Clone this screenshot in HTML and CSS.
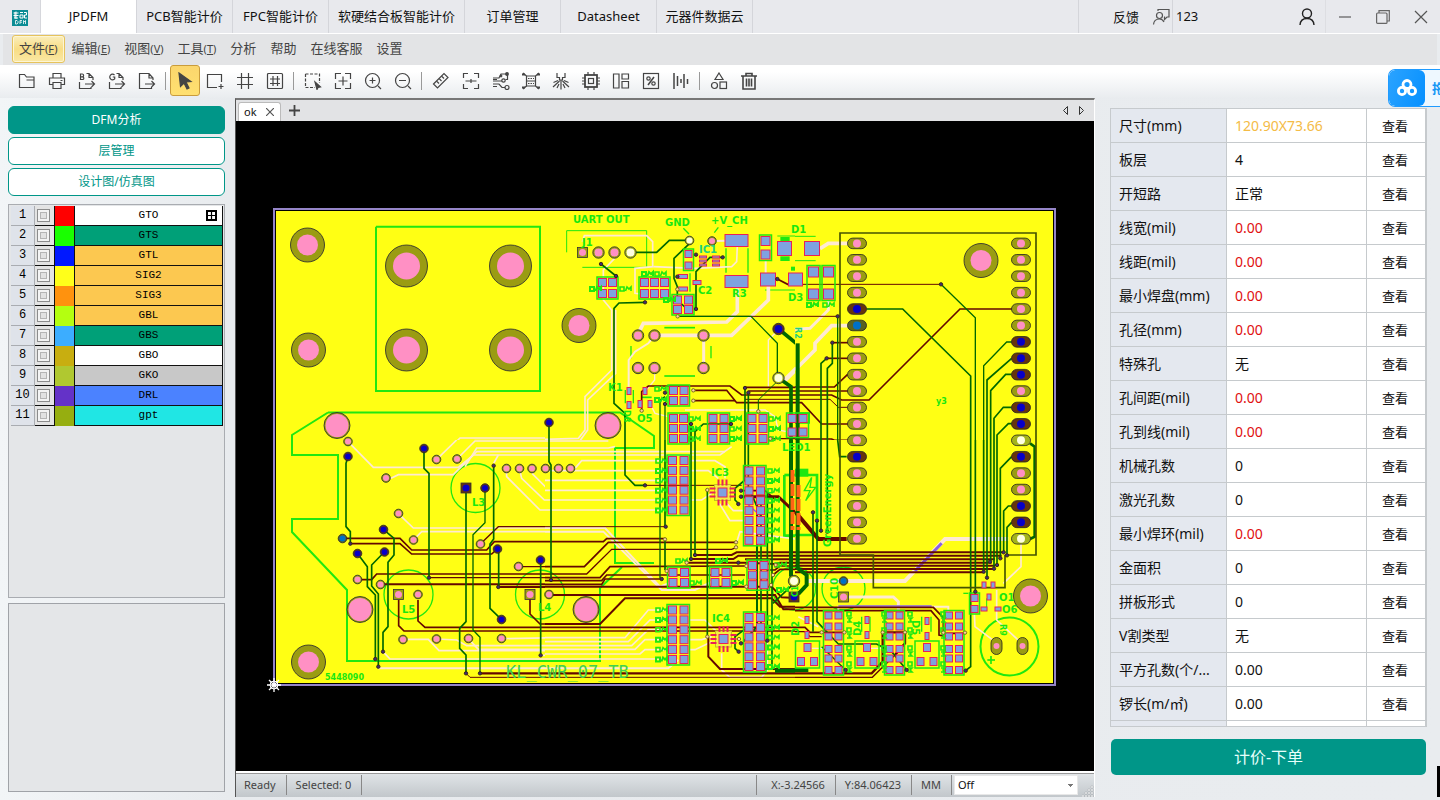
FILE: index.html
```html
<!DOCTYPE html>
<html lang="zh-CN">
<head>
<meta charset="utf-8">
<title>JPDFM</title>
<link rel="stylesheet" href="styles.css">
</head>
<body>
<header class="titlebar">
  <div class="logo"><svg width="16" height="16" viewBox="0 0 16 16"><rect width="16" height="16" fill="#0b8c94"/><path d="M1.500 3h5M4 1.500V9M1.500 5.500h5M2 8h4M3 2v6M8 2.500h3M8 5h3v3H8zM12 2.500h2.500V5H12.500v3h2.500" stroke="#fff" fill="none"/><path d="M3.500 10.500V14h1.500l1-1v-1.500l-1-1zM10 10.500H8V14M8 12.200h2M11.500 14v-3.500l1 1.500 1-1.500V14" stroke="#fff" fill="none" stroke-width=".8"/></svg></div>
  <nav class="tabs">
    <button class="tab tab-on">JPDFM</button>
    <button class="tab">PCB智能计价</button>
    <button class="tab">FPC智能计价</button>
    <button class="tab tab-wide">软硬结合板智能计价</button>
    <button class="tab">订单管理</button>
    <button class="tab">Datasheet</button>
    <button class="tab">元器件数据云</button>
  </nav>
  <div class="account">
    <button class="feedback">反馈<svg width="18" height="18" viewBox="0 0 18 18" fill="none" stroke="#555" stroke-width="1.200"><path d="M6 3V1.500h11V9h-2l-2.500 2.500V9H12"/><circle cx="7.500" cy="7.500" r="3"/><path d="M1.500 16.500c.3-3.500 2.500-5.500 6-5.500 2 0 3.500 1 4.500 3"/></svg></button>
    <span class="uid">123</span>
    <button class="win user" aria-label="用户"><svg width="16" height="18" viewBox="0 0 16 18" fill="none" stroke="#222" stroke-width="1.400"><circle cx="8" cy="5.500" r="4.500"/><path d="M1 17c.3-4.500 3-6.500 7-6.500s6.700 2 7 6.500"/></svg></button>
    <button class="win" aria-label="最小化"><svg width="14" height="14" fill="none" stroke="#666" stroke-width="1.300"><path d="M1 7h12"/></svg></button>
    <button class="win" aria-label="还原"><svg width="14" height="14" fill="none" stroke="#666" stroke-width="1.200"><rect x=".6" y="3" width="10.400" height="10.400" rx="1"/><path d="M3 3V.7h10.300V11H11"/></svg></button>
    <button class="win" aria-label="关闭"><svg width="14" height="14" fill="none" stroke="#555" stroke-width="1.200"><path d="M1 1l12 12M13 1L1 13"/></svg></button>
  </div>
</header>
<nav class="menubar">
  <button class="menu menu-on">文件<small>(<u>F</u>)</small></button>
  <button class="menu">编辑<small>(<u>E</u>)</small></button>
  <button class="menu">视图<small>(<u>V</u>)</small></button>
  <button class="menu">工具<small>(<u>T</u>)</small></button>
  <button class="menu">分析</button>
  <button class="menu">帮助</button>
  <button class="menu">在线客服</button>
  <button class="menu">设置</button>
</nav>
<div class="toolbar">
  <button class="tool" aria-label="打开"><svg viewBox="0 0 18 18"><path d="M1.500 15.500v-13h5l2 2.500h7.500v10.500zM8.500 8h7.500"/></svg></button>
  <button class="tool" aria-label="打印"><svg viewBox="0 0 18 18"><path d="M5 6V1.500h8V6M5 12.500H1.500V6h15v6.500H13M5 10.500h8v6H5zM12.500 8.500h2"/></svg></button>
  <button class="tool" aria-label="导出B"><svg viewBox="0 0 18 18"><path d="M8.500 1.500H11l4 4V8M1.500 10v6.500H13V15M7 12h9.500M13.500 9l3 3-3 3M11 1.500v4h4"/><path d="M2.500 2v5.500h2a1.300 1.300 0 000-2.700H2.500h1.700a1.300 1.300 0 000-2.800z"/></svg></button>
  <button class="tool" aria-label="导出G"><svg viewBox="0 0 18 18"><path d="M8.500 1.500H11l4 4V8M1.500 10v6.500H13V15M7 12h9.500M13.500 9l3 3-3 3M11 1.500v4h4"/><path d="M6.500 3a2.800 2.800 0 10.200 3.800V5H4.800"/></svg></button>
  <button class="tool" aria-label="导出"><svg viewBox="0 0 18 18"><path d="M15 8V6l-4-4.500H1.500v15h12V15M11 1.500V6h4M7 12h9.500M13.500 9l3 3-3 3"/></svg></button>
  <i class="sep"></i>
  <button class="tool tool-on" aria-label="选择"><svg viewBox="0 0 18 18"><path d="M3 1l12 8.500-5 .5 3 6-2 1-3-6-3.500 3.500z" fill="#444"/></svg></button>
  <button class="tool" aria-label="框选"><svg viewBox="0 0 18 18"><path d="M15.500 10V2.500h-14v13H11M15 12v5M12.500 14.500h5"/></svg></button>
  <button class="tool" aria-label="网格"><svg viewBox="0 0 18 18"><path d="M1 5.500h16M1 12.500h16M5.500 1v16M12.500 1v16"/></svg></button>
  <button class="tool" aria-label="捕捉网格"><svg viewBox="0 0 18 18"><rect x="1.500" y="1.500" width="15" height="15" rx="1"/><path d="M4 7h10M4 11.500h10M7 4v10M11.500 4v10"/></svg></button>
  <i class="sep"></i>
  <button class="tool" aria-label="区域缩放"><svg viewBox="0 0 18 18"><path d="M1.500 2h14v9M1.500 2v13.500H11" stroke-dasharray="3 1.500"/><path d="M11 10l5.500 5-2.500.5-1 2z" fill="#444"/></svg></button>
  <button class="tool" aria-label="适合窗口"><svg viewBox="0 0 18 18"><path d="M1.500 7V1.500H7M11 1.500h5.500V7M16.500 11v5.500H11M7 16.500H1.500V11M9 4.500v9M4.500 9h9"/></svg></button>
  <button class="tool" aria-label="放大"><svg viewBox="0 0 18 18"><circle cx="8.500" cy="8.500" r="7"/><path d="M14 14l3 3M8.500 5.500v6M5.500 8.500h6"/></svg></button>
  <button class="tool" aria-label="缩小"><svg viewBox="0 0 18 18"><circle cx="8.500" cy="8.500" r="7"/><path d="M14 14l3 3M5 8.500h7"/></svg></button>
  <i class="sep"></i>
  <button class="tool" aria-label="测量"><svg viewBox="0 0 18 18"><path d="M1.500 12L12 1.500l4 4L5.500 16zM5 9.500L7 11.500M7.500 7l2 2M10 4.500l2 2"/></svg></button>
  <button class="tool" aria-label="间距"><svg viewBox="0 0 18 18"><path d="M1.500 6V1.500H6M12 1.500h4.500V6M16.500 12v4.500H12M6 16.500H1.500V12M3.500 9h11M9 7v4"/></svg></button>
  <button class="tool" aria-label="线路"><svg viewBox="0 0 18 18"><path d="M1 6h6l2-4h5M1 9h9M1 12h6l3 3.500h3M1 14.500h4M1 7.500h4M13.500 7.500h2V3"/><circle cx="15" cy="2" r="1.300" fill="#444"/><circle cx="11.500" cy="8.500" r="1.700"/><circle cx="9" cy="4" r=".8"/><circle cx="15" cy="15.500" r="2"/></svg></button>
  <button class="tool" aria-label="封装"><svg viewBox="0 0 18 18"><path d="M4.500 4h9M4.500 14h9M4.500 4v10M13.500 4v10M4 9h10M1 1l3.500 3M17 1l-3.500 3M1 17l3.500-3M17 17l-3.500-3"/><path d="M6 6.500h6M6 11.500h6" stroke-dasharray="1.500 1"/><path d="M0 2.500h3M15 2.500h3M0 15.500h3M15 15.500h3" stroke-width="2"/></svg></button>
  <button class="tool" aria-label="钻孔"><svg viewBox="0 0 18 18"><path d="M5 1v4.500h2.500V8h3V5.500H13V1M9 8v9.500M7.500 9L1 15M10.500 9l6.500 6M1.500 10.500L6 8.500M16.500 10.500L12 8.500M5 16l2-4M13 16l-2-4"/></svg></button>
  <button class="tool" aria-label="芯片"><svg viewBox="0 0 18 18"><rect x="3" y="3" width="12" height="12" stroke-width="1.800"/><rect x="6.500" y="6.500" width="5" height="5"/><path d="M6 0v3M12 0v3M6 15v3M12 15v3M0 6h3M0 9h3M0 12h3M15 6h3M15 9h3M15 12h3"/></svg></button>
  <button class="tool" aria-label="拼板"><svg viewBox="0 0 18 18"><path d="M1.500 2h5.500v14H1.500zM10 2h6.500v5H10zM10 9.500h6.500V16H10z"/></svg></button>
  <button class="tool" aria-label="利用率"><svg viewBox="0 0 18 18"><rect x="1.500" y="1.500" width="15" height="15"/><path d="M6 13l6-8" stroke-width="1.500"/><circle cx="6.500" cy="6.500" r="1.700"/><circle cx="11.500" cy="11.500" r="1.700"/></svg></button>
  <button class="tool" aria-label="铣边"><svg viewBox="0 0 18 18"><path d="M2 1v16M5.500 4v10M9 7v4M12 2v14M15.500 7v5" stroke-width="1.500"/></svg></button>
  <i class="sep"></i>
  <button class="tool" aria-label="图形"><svg viewBox="0 0 18 18"><path d="M9 1l4 6.500H5z"/><circle cx="4.500" cy="13.500" r="3"/><rect x="10" y="10" width="6.500" height="6.500"/></svg></button>
  <button class="tool" aria-label="删除"><svg viewBox="0 0 18 18"><path d="M1 4h16M6 4V1.500h6V4M3 4v13h12V4M6.500 6.500v8M9 6.500v8M11.500 6.500v8" stroke-width="1.600"/></svg></button>
  <div class="netdisk"><span class="netdisk-logo"><svg width="20" height="18" viewBox="0 0 20 18" fill="none" stroke="#fff" stroke-width="2.800"><circle cx="10" cy="5.500" r="4"/><circle cx="5" cy="12" r="3.600"/><circle cx="15" cy="12" r="3.600"/></svg></span><span class="netdisk-text">拖</span></div>
</div>
<main class="work">
  <aside class="left">
    <button class="pill pill-on">DFM分析</button>
    <button class="pill">层管理</button>
    <button class="pill">设计图/仿真图</button>
    <div class="layers"><table class="layer-table"><tbody id="layers"></tbody></table></div>
    <div class="preview"></div>
  </aside>
  <section class="center">
    <div class="doc-tabs">
      <button class="doc-tab">ok<svg width="8" height="8" stroke="#555" stroke-width="1.200"><path d="M0 0l8 8M8 0L0 8"/></svg></button>
      <button class="doc-add" aria-label="新建"><svg width="11" height="11" stroke="#444" stroke-width="1.800"><path d="M0 5.500h11M5.500 0v11"/></svg></button>
      <span class="doc-nav"><svg width="22" height="9" fill="none" stroke="#333"><path d="M4.500.5v8l-4-4zM16.500.5v8l4-4z"/></svg></span>
    </div>
    <svg class="board" id="board" viewBox="236 121 858 650" role="img" aria-label="PCB"></svg>
    <footer class="status">
      <span class="cell">Ready</span><span class="cell cell-grow">Selected: 0</span>
      <span class="cell cell-pos">X:-3.24566</span><span class="cell">Y:84.06423</span><span class="cell">MM</span>
      <select class="snap" aria-label="Snap"><option>Off</option></select>
      <svg class="grip" width="12" height="12" fill="#fff" stroke="#a4a8ac" stroke-width=".5"><path d="M9 1h2v2H9zM6 4h2v2H6zM9 4h2v2H9zM3 7h2v2H3zM6 7h2v2H6zM9 7h2v2H9zM0 10h2v2H0zM3 10h2v2H3zM6 10h2v2H6zM9 10h2v2H9z"/></svg>
    </footer>
  </section>
  <aside class="right">
    <div class="report"><table class="report-table"><tbody id="report"></tbody></table></div>
    <button class="order">计价-下单</button>
    <i class="edge"></i>
  </aside>
</main>
<script src="app.js"></script>
</body>
</html>
```
FILE: styles.css
```css
* { box-sizing: border-box; }
body { margin: 0; height: 100vh; display: flex; flex-direction: column; overflow: hidden; background: #e9ecef; color: #111; font: 13px/18px "Noto Sans", "Noto Sans CJK SC", sans-serif; }
button { font: inherit; color: inherit; background: none; border: 0; padding: 0; margin: 0; }
svg { display: block; flex: none; }
.titlebar { display: flex; height: 34px; flex: none; background: #e8e9ed; border-bottom: 1px solid #fff; }
.logo { width: 41px; padding: 10px 12px; border-right: 1px solid #d6d7dc; }
.tabs { display: flex; flex: 1; }
.tab { width: 96px; padding-bottom: 2px; border-right: 1px solid #d4d5da; white-space: nowrap; }
.tab-wide { width: 136px; }
.tab-on { background: #fff; }
.account { display: flex; align-items: stretch; border-left: 1px solid #d4d5da; }
.feedback { display: flex; align-items: center; gap: 13px; padding: 0 2px 0 34px; border-right: 1px solid #d4d5da; }
.uid { width: 115px; padding: 7px 3px; }
.win { width: 38px; display: grid; place-items: center; }
.user { border-right: 1px solid #dddee2; }
.menubar { display: flex; height: 31px; flex: none; margin: 0 3px; padding: 1px 9px 2px; background: #e3e4e6; color: #444; }
.menu { display: flex; align-items: center; padding: 0 6px 2px; border: 1px solid transparent; border-radius: 3px; }
.menu small { font-size: 11px; padding-top: 2px; }
.menu-on { background: linear-gradient(#faeebc, #f8dd84 50%, #fae8a4); border-color: #e6c35c; box-shadow: inset 0 0 0 1px #fdf5d4; }
.toolbar { position: relative; display: flex; height: 33px; flex: none; padding: 0 12px; background: linear-gradient(#fff 20%, #e9ecef); }
.tool { width: 30px; height: 31px; display: grid; place-items: center; border: 1px solid transparent; border-radius: 3px; }
.tool svg { width: 18px; height: 18px; fill: none; stroke: #444; stroke-width: 1.2; }
.tool-on { background: linear-gradient(#fbd66d, #ffe070); border-color: #c99c3c; }
.sep { width: 1px; height: 18px; margin: 7px 4px 7px 3px; background: #999; }
.netdisk { position: absolute; right: 0; top: 4px; width: 52px; height: 38px; display: flex; overflow: hidden; border: 1px solid #1f9bff; border-right: 0; border-radius: 7px 0 0 7px; background: #eef8ff; color: #1597f5; z-index: 2; }
.netdisk-logo { width: 36px; flex: none; display: grid; place-items: center; background: linear-gradient(110deg, #2ba3ff, #0590ff); border-radius: 6px; }
.netdisk-text { padding: 9px 0 0 7px; white-space: nowrap; font-weight: bold; }
.work { display: flex; flex: 1; min-height: 0; background: linear-gradient(90deg, #f2f5f7, #e8ebee 16%, #e9ecef); }
.left { width: 235px; flex: none; display: flex; flex-direction: column; padding: 8px 10px 8px 8px; font-size: 12px; }
.pill { height: 28px; flex: none; margin-bottom: 3px; border: 1px solid #009688; border-radius: 6px; background: #fff; color: #009688; }
.pill-on { background: #009688; color: #fff; }
.layers { flex: 1; margin-top: 5px; padding: 1px 1px 1px 2px; border: 1px solid #a9acb1; background: #e4e6e8; min-height: 0; }
.layer-table { width: 100%; border-spacing: 0; table-layout: fixed; font: 11px/12px "Liberation Mono", monospace; color: #000; text-align: center; }
.layer-table td { height: 20px; padding: 0 0 1px; border-bottom: 1px solid #111; border-right: 1px solid #111; }
.layer-table .no { width: 24px; background: #dfe3ea; border-color: #a9acb1; font-size: 12px; }
.layer-table .tick { width: 20px; background: #e3e3e3; }
.layer-table .swatch { width: 20px; border-bottom: 0; }
.tick input { appearance: none; display: block; width: 13px; height: 13px; margin: 0 2px; border: 1px solid #8c8c8c; background: #e2e2e2; box-shadow: inset 0 0 0 2px #f4f4f4, inset 0 0 0 3px #b5b5b5; }
.name { position: relative; }
.grid-mark { position: absolute; right: 5px; top: 4px; }
.preview { height: 189px; margin-top: 5px; border: 1px solid #a0a3a8; background: #e4e6e8; }
.center { flex: 1; min-width: 0; display: flex; flex-direction: column; border-top: 2px solid #777; border-left: 1px solid #555; border-right: 1px solid #fff; margin-bottom: 3px; }
.doc-tabs { display: flex; height: 21px; flex: none; background: #e2e3e5; font-size: 11px; }
.doc-tab { display: flex; align-items: center; gap: 9px; margin: 2px 0 0 2px; padding: 0 6px 0 5px; background: #fff; border: 1px solid #bbb; border-bottom: 0; border-radius: 3px 3px 0 0; }
.doc-add { margin-left: 8px; }
.doc-nav { margin: 6px 9px 0 auto; }
.board { flex: 1; min-height: 0; width: 100%; background: #000; }
.status { display: flex; height: 26px; flex: none; border-top: 2px solid #fff; box-shadow: inset 0 1px #999; background: linear-gradient(#e1e5e8, #c2c7cb); font-size: 11px; color: #444; }
.cell { padding: 1px 10px 0 8px; margin: 2px 0; border-right: 1px solid #888; white-space: nowrap; }
.cell + .cell { padding-left: 9px; }
.cell-grow + .cell-pos { margin-left: auto; border-left: 1px solid #888; padding-left: 14px; }
.snap { width: 124px; margin: 2px 0 2px 2px; padding: 0 3px; border: 1px solid #e8e8e8; border-radius: 0; color: #111; font: inherit; appearance: none; background: linear-gradient(#777, #777) 113px 8px / 5px 1px no-repeat, linear-gradient(#777, #777) 114px 9px / 3px 1px no-repeat, linear-gradient(#777, #777) 115px 10px / 1px 1px no-repeat, #fff; }
.grip { margin: 12px 0 0 4px; }
.right { position: relative; width: 345px; flex: none; display: flex; flex-direction: column; padding: 10px 13px 25px 15px; font-size: 14px; }
.report { flex: 1; min-height: 0; overflow: hidden; background: #fff; border: 1px solid #c6cacd; border-right-width: 2px; }
.report-table { width: 100%; border-spacing: 0; table-layout: fixed; }
.report-table th, .report-table td { height: 34px; padding: 0 8px; border-bottom: 1px solid #c6cacd; border-right: 1px solid #c6cacd; text-align: left; font-weight: normal; white-space: nowrap; }
.report-table th { width: 116px; background: #e4e8ef; }
.report-table .view { width: 58px; padding-right: 10px; border-right: 0; text-align: center; font-size: 13px; }
.report-table .value { width: 140px; }
.report-table .value-bad { color: #e01010; }
.report-table .value-size { color: #f4bb46; }
.order { height: 36px; flex: none; margin: 12px 1px 0; border-radius: 5px; background: #009688; color: #e6fffb; font-size: 16px; }
.edge { position: absolute; right: 0; bottom: 3px; width: 3px; height: 31px; background: #000; }
.silk { fill: #18e810; font: bold 10px "DejaVu Sans", sans-serif; }
.silk-teal { fill: #20d080; }
.silk-thin { fill: #40d050; font: 17px "DejaVu Sans Mono", monospace; }
.silk-small { font-size: 8px; }
```
FILE: app.js
```js
const layers = [
  ["GTO", "#ff0000", "#fff"], ["GTS", "#19ff00", "#00a078"], ["GTL", "#0018ff", "#fcc850"],
  ["SIG2", "#ffff1a", "#fcc850"], ["SIG3", "#ff920e", "#fcc850"], ["GBL", "#b4ff10", "#fcc850"],
  ["GBS", "#3cadff", "#00a078"], ["GBO", "#c8ae10", "#fff"], ["GKO", "#b0c830", "#c8c8c8"],
  ["DRL", "#6432c8", "#4b82ff"], ["gpt", "#96ae10", "#20e6e4"]
];
document.getElementById("layers").innerHTML = layers.map(([name, color, back], i) =>
  `<tr><td class="no">${i + 1}</td><td class="tick"><input type="checkbox" aria-label="${name}"></td>` +
  `<td class="swatch" style="background:${color}"></td><td class="name" style="background:${back}">${name}` +
  (i ? "" : `<svg class="grid-mark" width="11" height="11" fill="none" stroke="#000"><path d="M1 1h9v9H1z" stroke-width="2"/><path d="M5.500 1v9M1 5.500h9" stroke-width="1.200"/></svg>`) +
  `</td></tr>`).join("");

const report = [
  ["尺寸(mm)", "120.90X73.66", "value-size"], ["板层", "4"], ["开短路", "正常"],
  ["线宽(mil)", "0.00", "value-bad"], ["线距(mil)", "0.00", "value-bad"], ["最小焊盘(mm)", "0.00", "value-bad"],
  ["孔径(mm)", "0.00", "value-bad"], ["特殊孔", "无"], ["孔间距(mil)", "0.00", "value-bad"],
  ["孔到线(mil)", "0.00", "value-bad"], ["机械孔数", "0"], ["激光孔数", "0"],
  ["最小焊环(mil)", "0.00", "value-bad"], ["金面积", "0"], ["拼板形式", "0"],
  ["V割类型", "无"], ["平方孔数(个/...", "0.00"], ["锣长(m/㎡)", "0.00"]
];
document.getElementById("report").innerHTML = report.map(([label, value, tone]) =>
  `<tr><th scope="row">${label}</th><td class="value ${tone || ""}">${value}</td><td class="view"><button>查看</button></td></tr>`
).join("") + `<tr><th></th><td class="value"></td><td class="view"></td></tr>`;

/* Board sectors: traces are stored in thirds of a unit from the sector origin.
   Kinds: s silk, w pale copper, m maroon inner layer, g green layer, p purple overlap, o outline. */
const inks = { s: "#20e810", w: "#ffead2", p: "#8a60e0", m: "#640800", g: "#006800", o: "#465400" };
const sectors = [
  { x: 265, y: 200, w: 280, h: 240, t: {
    s: ["6|333,80 825,80 825,573 333,573 333,80"],
    w: ["5|548,750 585,714 870,714", "5|605,750 630,722 870,722", "5|625,750 635,742 870,742"] } },
  { x: 545, y: 200, w: 250, h: 240, v: "168,192 213,228 533,172 453,164 397,230 453,327 300,307 360,578 360,612 600,564 610,578 438,672 558,672 697,237",
    e: "398,349 445,571 445,602 640,634 676,716 290,632 397,268", t: {
    s: ["3|65,157 65,92 305,92 305,202 112,202", "5|358,383 450,383", "5|358,528 450,528", "4|258,438 258,475", "4|498,438 498,475",
      "4|543,145 543,218", "4|609,145 609,218", "3|697,108 780,108", "3|660,270 780,270", "4|435,220 435,275", "4|415,85 432,102", "4|520,82 508,98",
      "4|241,570 241,610", "4|265,570 265,610", "14|706,118 734,118", "14|706,176 734,176", "12|738,206 766,206", "5|290,592 320,592"],
    w: ["5|112,125 118,107 305,107 323,125 323,200 270,205 270,280 300,283", "5|209,175 175,210 175,300 200,330 200,510 120,590 120,690 100,715 0,718",
      "5|212,330 212,520 128,600 128,690 105,722 0,724", "5|0,742 180,742", "11|280,400 295,370 545,366 577,335 577,265", "11|329,406 560,406 670,300 670,255",
      "9|476,406 476,504", "6|251,560 251,480 270,455 310,430 329,406", "4|329,504 329,540 300,575", "6|505,123 545,122", "14|715,545 780,480",
      "5|325,200 450,205 560,200 575,185 577,135", "4|420,630 660,630 690,650 700,690 750,700", "4|670,560 670,420 700,390", "4|310,600 330,640 370,650", "6|662,180 662,225"],
    g: ["5|257,157 335,157 373,121 434,121", "5|434,130 387,175 387,235 397,260 397,300 440,340", "5|533,172 495,172 453,215 453,327", "5|168,192 213,228",
      "5|300,307 222,309 207,325 207,610 240,640 240,750", "4|398,349 618,349 697,430 697,534", "11|701,387 760,435 760,750", "11|701,534 738,560 738,750",
      "3|701,540 640,600 640,634", "5|12,665 12,750", "4|345,750 345,600 360,590", "4|360,612 360,750", "5|600,560 600,750", "5|610,575 610,750", "5|438,672 438,750", "5|558,672 475,672 450,695 450,750"],
    m: ["3|398,349 780,349", "5|290,630 290,575 310,558 555,558 590,585 780,585", "5|445,571 545,571 575,608 780,608", "5|445,602 570,602", "5|600,562 780,562", "5|610,573 780,573", "3|600,598 780,598", "4|676,716 780,716", "5|697,237 728,253 780,253"] } },
  { x: 795, y: 200, w: 258, h: 240, v: "438,253 128,349 112,428 95,475", t: {
    s: ["3|0,109 62,109", "3|0,182 62,182", "6|0,640 42,640 42,668 0,668"],
    o: ["5|135,750 135,99 723,99 723,750"],
    w: ["11|75,146 100,130 160,130", "11|185,377 110,377 60,430 60,450 0,510", "9|100,300 100,330 45,385 0,388"],
    m: ["3|0,253 438,253", "3|0,349 128,349", "5|655,327 495,327 222,600 140,600 110,585 0,585", "5|0,573 160,573", "5|0,561 118,561 158,523", "3|0,598 105,598 130,622 160,622", "5|112,428 160,428", "5|95,475 160,475", "5|0,608 20,608 80,672 160,672", "5|0,717 110,717 118,721 160,721"],
    g: ["5|215,327 323,327 527,528 527,750", "4|438,253 541,353 541,750", "4|650,426 635,426 566,497 566,750", "5|650,475 576,540 576,750", "5|650,523 632,523 587,572 587,750", "5|650,622 625,622 597,655 597,750", "5|650,671 640,671 606,705 606,750",
      "5|112,428 112,490 97,505 97,750", "5|95,475 78,490 78,750", "4|128,349 128,750", "12|8,430 8,750"] } },
  { x: 265, y: 440, w: 280, h: 243, v: "686,77 256,311 492,413 700,441 354,635 331,657 340,680 603,700 645,700 827,646", t: {
    w: ["5|249,5 325,82 580,82 625,45 870,45", "5|363,114 380,114 400,104 565,104 635,35 870,35", "5|515,58 575,0", "5|576,57 630,3 870,3", "5|600,80 635,24 870,24",
      "5|400,221 445,264 870,264", "5|445,300 470,275 870,275", "5|724,85 725,110 825,210 870,210", "5|763,85 770,115 838,180 870,180", "5|801,100 852,151 870,151", "5|842,100 862,121 870,121",
      "5|686,70 700,45", "5|414,598 490,598 522,632 870,632", "5|514,597 575,600 605,617 870,617", "5|610,596 640,628 870,628", "5|709,596 870,593", "5|354,635 375,657 870,657", "6|340,685 870,685", "5|827,646 870,646"],
    m: ["5|232,295 405,295 440,330 665,330 688,305 870,305", "5|256,311 405,311 440,342 680,342 697,327", "4|646,312 700,260 870,260", "5|277,419 320,419 335,402 870,402", "6|346,433 870,433", "4|492,413 870,413", "6|700,441 870,441",
      "5|401,480 401,557 417,573 870,573", "5|459,480 459,543 480,562 870,562", "4|761,380 870,380", "5|795,475 795,522 825,552 870,552", "7|645,700 870,700", "3|603,700 615,712 870,712"],
    g: ["5|249,50 243,70 243,260 256,275 256,311", "5|477,25 477,85 492,100 492,413", "5|355,268 387,295 387,345 369,367 369,560 354,577 354,635", "5|278,341 307,380 307,440 331,465 331,657", "5|358,336 320,375 320,438 340,462 340,680",
      "5|603,144 603,545 584,565 584,625 603,645 603,700", "4|660,144 660,248 624,284 624,570 645,592 645,700", "5|686,77 686,297 675,312 675,505 709,538", "5|701,327 701,441", "5|827,360 827,646"] } },
  { x: 545, y: 440, w: 250, h: 243, v: "18,420 300,136 362,260 350,417 450,345 438,357 580,192 588,170 588,152 581,635 588,610 580,368 667,602",
    e: "360,298 573,307 573,322 365,393 604,378 604,440 425,368 678,435 692,375 684,405 487,150 487,590 582,597", t: {
    s: ["8|718,105 718,287 780,287", "8|718,105 780,105"],
    w: ["5|0,24 190,24 210,20", "5|0,3 190,3", "5|0,35 540,35", "5|0,45 525,45 560,20", "5|90,85 110,62 370,62", "5|0,92 370,92", "5|0,121 370,121", "5|0,151 370,151", "5|0,180 370,180", "5|0,210 370,210",
      "6|0,264 180,264 345,440 375,428", "6|0,275 175,275 350,450 450,450 500,425", "5|0,593 240,593 310,510 370,510", "5|0,605 250,605 315,540 370,540", "5|0,617 260,617 310,569 370,569", "5|0,628 270,628 300,599 370,599", "5|0,642 285,642 300,629 370,629",
      "6|0,685 370,685 400,660", "5|0,657 370,657", "5|432,62 510,62 540,80 540,115", "5|432,92 490,92 520,115", "5|432,180 470,180 500,160", "5|523,190 555,242 600,242", "5|545,190 565,212 600,212",
      "5|432,540 480,540 515,575", "5|432,599 470,599 500,590", "5|432,629 450,629 500,605", "5|530,640 530,690 555,712 650,712 667,690 667,600", "5|575,307 585,275 780,301"],
    m: ["3|0,260 362,260", "5|0,305 175,305 185,296 360,296", "5|0,380 118,380 190,307 575,307", "4|0,402 125,402 200,328 560,328 575,322", "5|0,413 165,413 195,380 600,378", "5|0,422 170,422 185,405 600,405", "5|0,433 170,433 180,417 350,417",
      "6|0,440 680,440 710,472 780,475", "6|0,465 690,465 715,508 780,508", "6|0,552 165,552 240,475 680,475 705,500 780,500", "5|0,562 780,562", "5|0,573 780,573", "7|0,700 780,700", "3|0,712 780,712",
      "6|450,345 560,345 575,337 780,337", "6|440,357 565,357 580,347 780,347", "6|600,358 780,358", "6|425,368 600,368 690,372 705,368 780,368", "5|670,390 690,390 705,378 780,378", "5|684,405 705,388 780,388", "3|300,136 590,136", "9|590,170 700,170 780,245", "6|490,590 490,650 525,687 780,687", "5|588,152 660,152 690,178"],
    p: ["4|600,185 660,240 660,320"],
    g: ["5|12,0 12,65 18,75 18,420", "5|240,0 240,105 270,136 300,136", "4|345,0 345,415", "5|360,0 360,260", "5|360,298 360,390", "5|438,0 438,355", "5|450,0 450,345", "5|600,0 600,120 570,145 570,180 582,192", "5|610,0 610,140 636,200", "5|487,150 487,590", "6|636,190 636,560 595,605", "5|648,190 648,570", "5|681,190 681,680", "5|667,160 667,600",
      "12|738,0 738,410", "12|760,0 760,395 780,410", "5|610,560 570,590 570,625 581,635", "12|690,692 780,692", "5|747,430 684,490"] } },
  { x: 795, y: 440, w: 258, h: 243, v: "54,217 66,242 78,272 97,275 566,395 576,413 585,365 597,386 606,375 616,355 626,337 636,346 541,455 152,690 335,690 512,692", e: "80,577 148,577 263,577 330,577 445,578 510,578", t: {
    s: ["8|0,105 66,105 66,285 0,285", "24|0,98 40,98", "4|50,112 28,152 45,152 32,182 62,142 45,142 50,112", "4|200,530 200,575", "4|225,530 225,575", "4|380,530 380,575", "4|408,530 408,575", "5|577,660 600,660", "5|588,648 588,672", "3|575,475 575,512", "4|505,460 520,460"],
    o: ["5|135,0 135,345 235,345 235,443 630,443 630,345", "5|723,0 723,345 635,345"],
    w: ["12|30,423 330,423 450,297 640,297", "9|145,471 295,471 310,485 310,520", "5|678,300 678,380 625,430", "5|538,520 540,560 600,605", "5|605,450 605,540 680,610", "6|130,520 130,500 460,500 460,520", "5|10,530 70,560", "4|50,625 90,625", "4|228,625 270,625"],
    p: ["9|360,393 440,310", "4|130,498 410,498"],
    m: ["6|0,337 625,337", "6|0,347 620,347", "6|0,358 600,358", "6|0,368 590,368", "6|0,377 600,377", "6|0,387 595,387", "6|0,397 565,397", "12|0,215 70,297 155,297", "5|0,502 415,502 445,533 445,580 510,580", "5|0,512 408,512 432,540 432,585 445,588", "5|0,562 30,562 45,577 150,577", "4|0,575 30,575 45,590 80,590", "7|0,700 230,700 263,665 263,577 330,577 330,610 300,645", "4|0,712 232,712 300,645"],
    g: ["12|8,0 8,385 35,405 35,435 10,462", "5|78,0 78,272", "5|97,0 97,272", "5|128,0 134,50 155,50", "5|527,0 527,680 512,692", "5|541,0 541,455", "5|566,0 566,395", "5|576,0 576,413", "5|587,0 587,365", "5|597,0 597,385", "5|606,0 606,375", "5|650,50 616,85 616,355", "5|650,198 640,198 626,213 626,335", "5|650,247 636,262 636,345",
      "8|705,10 719,20 719,290 705,297", "5|54,217 54,575", "5|66,242 66,545 130,612 245,612 290,635 335,690", "4|80,620 152,690", "12|0,690 40,690"] } }
];

const out = [];
const add = s => out.push(s);
const poly = (kind, item) => {
  const [w, pts] = item.split("|");
  add(`<polyline points="${pts}" fill="none" stroke="${inks[kind]}" stroke-width="${w}"/>`);
};
const spread = (x, step, n) => Array.from({ length: n }, (_, i) => x + i * step);
const pad = (x, y, w, h) => add(`<rect x="${x - w / 2}" y="${y - h / 2}" width="${w}" height="${h}" fill="#7ea2e0" stroke="#e82058"/>`);
const tones = { p: ["#9a9c12", "#ff90c4"], b: ["#66350c", "#0800c8"], w: ["#a4b41c", "#ffffe0"], t: ["#5a6220", "#0070c8"] };
const ring = (x, y, R, r, tone) => add(`<circle cx="${x}" cy="${y}" r="${R}" fill="${tones[tone][0]}" stroke="#223" stroke-width=".8"/><circle cx="${x}" cy="${y}" r="${r}" fill="${tones[tone][1]}"/>`);

add(`<rect x="274" y="209" width="781" height="476" fill="#000" stroke="#9585c8" stroke-width="2"/><rect x="276" y="211" width="777" height="472" fill="#ffff14"/>`);
add(`<path d="M328 412.500H620L654 436V448H615V563H654M622 567L600 588V661H347V590L292 532V519H338V455H292V435L328 412.500" fill="none" stroke="#20e810" stroke-width="2"/>`);
[[475.5, 488, 24.5], [408.5, 594.5, 24.5], [540, 594.5, 24.5], [843.5, 588.5, 21.5], [794, 588.5, 21.5], [1009.5, 646.5, 29]].forEach(([x, y, r]) =>
  add(`<circle cx="${x}" cy="${y}" r="${r}" fill="none" stroke="#20e810" stroke-width="${r > 28 ? 2 : 1.3}"/>`));

for (const kind of ["s", "w", "p", "m", "g", "o"]) {
  for (const s of sectors) {
    add(`<svg x="${s.x}" y="${s.y}" width="${s.w}" height="${s.h}" viewBox="0 0 ${s.w * 3} ${s.h * 3}">`);
    (s.t[kind] || []).forEach(item => poly(kind, item));
    add("</svg>");
  }
}
add(`<path d="M792.500 470V530M798.500 485V530" stroke="#ff6414" stroke-width="4" stroke-dasharray="12 2"/>`);

/* Two-terminal parts: column positions, row positions, pad size. */
const packs = [
  [[602.5, 612.5], [282.5, 293.5], 9], [[644.5, 654.5, 664.5], [282.5, 293.5], 9], [[677.5, 688.5], [300, 309.5], 9],
  [[688.5], [254, 265.5], 8], [[765.5], [241, 254.5], 10], [[813.5], [272, 294], 11], [[828.5], [272, 294], 11],
  [[673.5, 684], [390.5, 400.5], 9], [[673.5, 683.5], spread(418.5, 10, 3), 9], [[713, 724], spread(418.5, 10, 3), 9],
  [[752, 763], spread(418.5, 10, 3), 9], [[792, 803], [418.5, 432], 9], [[672.5, 684], spread(460.5, 9.9, 6), 9],
  [[749, 760.5], spread(471, 9.9, 8), 9], [[673, 684.5], [572.5, 582.5], 9], [[715, 726], [572.5, 582.5], 9],
  [[752.5, 764], spread(565.5, 9.6, 3), 9], [[672.5, 684], spread(610, 9.9, 6), 9], [[749, 760.5], spread(617.5, 9.8, 6), 9],
  [[828.5, 838.5], [615.5, 626.5, 636.5, 649, 658.5, 670], 8], [[889.5, 899.5], [615.5, 626.5, 636.5, 649, 658.5, 670], 8],
  [[949, 959], [615.5, 626.5, 636.5, 649, 658.5, 670], 8], [[974.5], [598, 609], 8]
];
packs.forEach(([xs, ys, size]) => {
  const x0 = xs[0], x1 = xs[xs.length - 1], y0 = ys[0], y1 = ys[ys.length - 1], m = size / 2 + 1;
  add(`<rect x="${x0 - m}" y="${y0 - m}" width="${x1 - x0 + 2 * m}" height="${y1 - y0 + 2 * m}" fill="none" stroke="#20e810" stroke-width="1.500"/>`);
  ys.forEach(y => xs.forEach(x => pad(x, y, size - 1, size - 1)));
});

/* Reference-designator blobs next to the part columns. */
const marks = [];
spread(461, 9.9, 6).forEach(y => marks.push([656, y]));
spread(610, 9.9, 6).forEach(y => marks.push([656, y]));
spread(471, 9.9, 8).forEach(y => marks.push([768, y]));
spread(618, 9.8, 6).forEach(y => marks.push([768, y]));
spread(419, 10, 3).forEach(y => marks.push([689, y], [730, y], [769, y]));
[[590, 289], [620, 289], [642, 274], [655, 274], [664, 300], [655, 389], [655, 400], [690, 583], [732, 583], [775, 565], [807, 305], [823, 305], [777, 590], [676, 561], [716, 561]].forEach(p => marks.push(p));
marks.forEach(([x, y], i) => add(`<path d="M${x} ${y - 2}h4v4h-4zM${x + 5.5} ${y + 2}l1.500-4 2 2 2-2v4" fill="none" stroke="#20e810" stroke-width="${i % 2 ? 2 : 1.6}"/>`));
[847, 908, 941, 882].forEach(x => [612, 628, 646, 662].forEach(y => add(`<path d="M${x} ${y}v4h4v-4zM${x} ${y + 6}h4l-2 2 2 2h-4" fill="none" stroke="#20e810" stroke-width="1.600"/>`)));

[[736.5, 240.5, 23, 12], [736.5, 281.5, 23, 12], [784.5, 248.5, 14, 14], [812, 248.5, 15, 14], [768, 279.5, 15, 13], [795.5, 279.5, 14, 13],
  [683, 276.5, 9, 4], [683, 289, 9, 4], [697, 282.5, 8, 4], [629, 391, 4, 7], [629, 405, 4, 7], [645, 391, 4, 7], [640, 404, 4, 7], [650, 404, 4, 7],
  [807, 620, 4, 7], [807, 635, 4, 7], [867, 620, 4, 7], [867, 635, 4, 7], [927, 621, 4, 7], [927, 636, 4, 7], [984, 585, 4, 6], [993, 585, 4, 6], [989, 597, 4, 6], [984, 609, 6, 4], [998, 609, 6, 4]
].forEach(p => pad(...p));
[807.5, 867, 927].forEach(x => {
  add(`<rect x="${x - 12}" y="641" width="24" height="27" fill="none" stroke="#20e810" stroke-width="1.500"/>`);
  pad(x, 647.5, 7, 8); pad(x - 6.5, 661.5, 7, 8); pad(x + 6.5, 661.5, 7, 8);
});
spread(257, 4, 3).forEach(y => { pad(703, y, 7, 2); pad(716, y, 7, 2); });
[[722.5, 492.5], [723.5, 639]].forEach(([x, y]) => {
  add(`<rect x="${x - 8}" y="${y - 8}" width="16" height="16" fill="#f4f040" stroke="#c8c020"/>`);
  pad(x, y, 9, 9);
  [-4, 0, 4].forEach(d => { pad(x - 10, y + d, 5, 1); pad(x + 10, y + d, 5, 1); pad(x + d, y - 10, 1, 5); pad(x + d, y + 10, 1, 5); });
});

[[307.5, 245], [308.5, 350], [579, 325.5], [981, 260.5], [1030.5, 596], [308.5, 662]].forEach(([x, y]) => ring(x, y, 17, 10.5, "p"));
[[406.5, 266], [510.5, 266], [406.5, 350], [510.5, 350]].forEach(([x, y]) => ring(x, y, 21, 13.5, "p"));
[[337, 425.5], [608, 425.5], [360, 609.5], [586, 609.5]].forEach(([x, y]) => ring(x, y, 13, 11.5, "p"));
const holes = {
  p: [[348, 441.5], [386, 478], [436.5, 459.5], [457, 459], [506.5, 468.5], [519.5, 468.5], [532, 468.5], [545.5, 468.5], [558.5, 468.5], [570.5, 468.5], [398.5, 513.5], [413.5, 540], [480.5, 544], [357.5, 579.5], [380.5, 584.5], [518.5, 566.5], [418, 594.5], [549, 594.5], [403, 639.5], [436.5, 639], [468.5, 638.5], [501.5, 638.5], [712, 241]],
  b: [[348, 456.5], [424, 448.5], [383.5, 529.5], [357.5, 553.5], [384.5, 552], [485, 488], [497.5, 549], [540.5, 560], [501.5, 619.5], [549, 422.5]],
  t: [[342.5, 538.5], [843.5, 581]], w: [[689.5, 240.5]]
};
for (const tone in holes) holes[tone].forEach(([x, y]) => ring(x, y, 4.3, 3, tone));
[[598.5, 252.5, "p"], [614.5, 252.5, "p"], [630.5, 252.5, "w"], [638, 335.5, "p"], [654.5, 335.5, "p"], [703.5, 335.5, "p"], [638, 368, "p"], [654.5, 368, "p"], [703.5, 368, "p"], [778.5, 329, "b"], [778.5, 378, "w"], [794, 581, "w"]].forEach(([x, y, t]) => ring(x, y, 5.7, 4, t));
[[466, 488, "b"], [398.5, 594.5, "p"], [530, 594.5, "p"], [582.5, 252.5, "p"], [794, 597, "b"], [843.5, 597, "p"]].forEach(([x, y, t]) =>
  add(`<rect x="${x - 5}" y="${y - 5}" width="10" height="10" fill="${tones[t][0]}" stroke="#333" stroke-width=".8"/><circle cx="${x}" cy="${y}" r="3.500" fill="${tones[t][1]}"/>`));
[[857, "ppppbtpppppppbppppp"], [1021, "ppppppbbbpbbwbppbbw"]].forEach(([x, kinds]) => [...kinds].forEach((t, i) => {
  const y = 243.4 + i * 16.41;
  add(`<rect x="${x - 9.5}" y="${y - 5.3}" width="19" height="10.600" rx="5.300" fill="${tones[t][0]}" stroke="#222" stroke-width=".8"/><circle cx="${x}" cy="${y}" r="4" fill="${tones[t][1]}"/>`);
}));
[996.5, 1022.5].forEach(x => add(`<rect x="${x - 5.5}" y="637.500" width="11" height="17" rx="5.500" fill="#9a9c12" stroke="#222" stroke-width=".8"/><circle cx="${x}" cy="646" r="3" fill="#ff90c4"/>`));

for (const s of sectors) {
  const dots = (list, fill, stroke) => (list || "").split(" ").filter(Boolean).forEach(p => {
    const [x, y] = p.split(",").map(n => n / 3);
    add(`<circle cx="${s.x + x}" cy="${s.y + y}" r="1.700" fill="${fill}" stroke="${stroke}" stroke-width="1"/>`);
  });
  dots(s.v, "#402878", "#3c2c10");
  dots(s.e, "#ffd0a0", "#7c7418");
}

const label = (x, y, text, cls = "", turn = 0) => add(`<text class="silk ${cls}" x="${x}" y="${y}"${turn ? ` transform="rotate(${turn} ${x} ${y})"` : ""}>${text}</text>`);
[[573, 223, "UART OUT"], [665, 226, "GND"], [711, 224, "+V_CH"], [791, 233, "D1"], [699, 253, "IC1", "silk-teal"], [698, 294, "C2"], [732, 297, "R3"], [788, 301, "D3"], [582, 246, "J1"],
  [608, 391, "K1"], [637, 422, "O5"], [711, 476, "IC3"], [712, 622, "IC4"], [782, 451, "LED1"], [472, 506, "L3"], [402, 613, "L5"], [538, 611, "L4"], [999, 601, "O1"], [1002, 613, "O6"],
  [506, 678, "KL_CWR_07_TB", "silk-thin"], [325, 680, "5448090", "silk-small"], [936, 404, "y3", "silk-small"],
  [838, 599, "C10", "", -90], [861, 636, "D4", "", -90], [912, 620, "D5", "", 90], [799, 636, "D2", "", -90], [831, 547, "GreenEnergy", "", -90], [798, 597, "C1", "silk-small", -90], [1000, 624, "R9", "silk-small", 90], [624, 410, "D8", "silk-small", 90], [795, 327, "R2", "silk-small silk-teal", 90]
].forEach(a => label(...a));

add(`<path d="M274 678v14M267 685h14M269 680l10 10M279 680l-10 10" stroke="#fff" stroke-width="1.300"/><circle cx="274" cy="685" r="4" fill="none" stroke="#fff"/>`);
document.getElementById("board").innerHTML = out.join("");
```
